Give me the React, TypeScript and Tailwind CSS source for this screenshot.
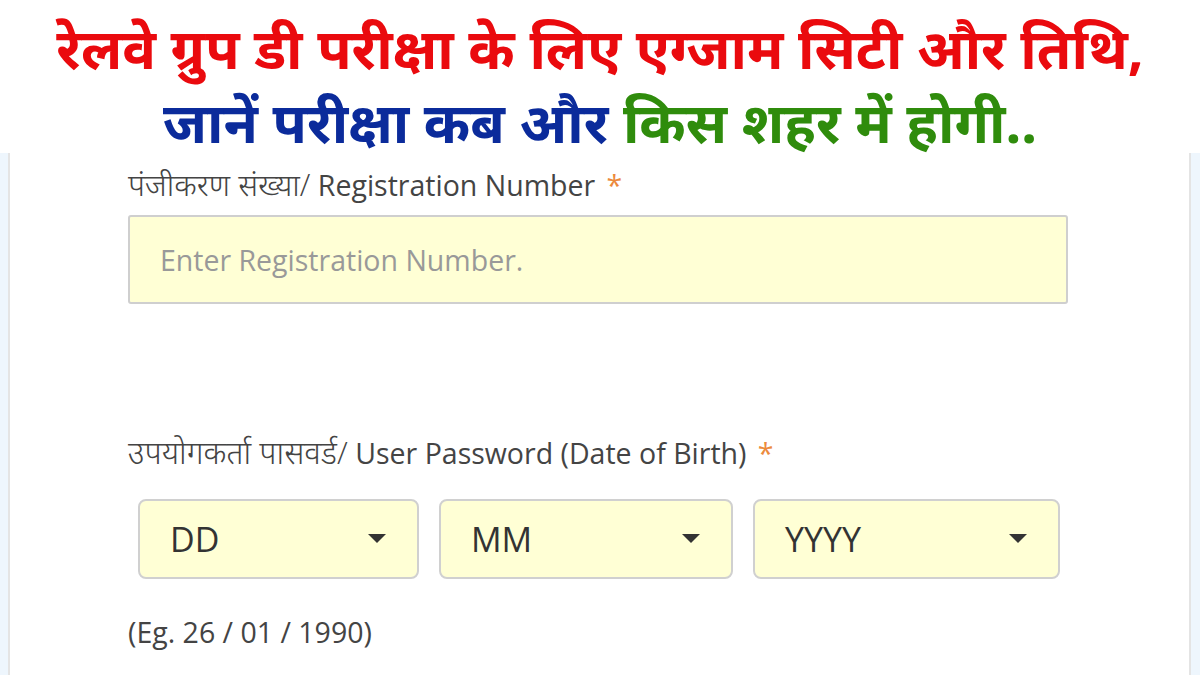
export default function App() {
  const selects = [
    { label: "DD", w: "w-[281px]" },
    { label: "MM", w: "w-[294px]" },
    { label: "YYYY", w: "w-[307px]" },
  ];

  return (
    <div className="w-[1200px] h-[675px] overflow-hidden bg-white flex flex-col font-['Open_Sans','Noto_Sans',sans-serif]">
      {/* heading */}
      <div className="h-[153px] flex flex-col items-center pt-[10px] font-bold text-[56px] leading-[74px] font-['Noto_Sans','Open_Sans',sans-serif]">
        <div className="text-[#ea0a0e]">रेलवे ग्रुप डी परीक्षा के लिए एग्जाम सिटी और तिथि,</div>
        <div>
          <span className="text-[#0b2b9b]">जानें परीक्षा कब और </span>
          <span className="text-[#2f8c0c]">किस शहर में होगी..</span>
        </div>
      </div>

      {/* form */}
      <div className="flex-1 flex">
        <div className="w-[10px] bg-[#eef6fd] border-r-2 border-[#e4e4e4]" />
        <div className="flex-1 flex flex-col pl-[118px] pt-[14px]">
          <label className="text-[28.5px] leading-[34px] text-[#444]">
            <span className="text-[31px] font-light">पंजीकरण संख्या/</span> Registration Number{" "}
            <span className="text-[#ec8a3c] ml-1">*</span>
          </label>
          <input
            className="mt-[13px] w-[940px] h-[89px] bg-[#ffffd5] border-2 border-[#cfcfcf] rounded-[3px] pl-[30px] text-[28.5px] text-[#444] placeholder:text-[#999] outline-none"
            placeholder="Enter Registration Number."
          />
          <label className="mt-[131px] text-[28.5px] leading-[34px] text-[#444]">
            <span className="text-[31.5px] font-light">उपयोगकर्ता पासवर्ड/</span> User Password (Date of Birth){" "}
            <span className="text-[#ec8a3c] ml-1">*</span>
          </label>
          <div className="mt-[29px] ml-[10px] flex gap-[20px]">
            {selects.map((s) => (
              <div
                key={s.label}
                className={`${s.w} h-[80px] bg-[#ffffd5] border-2 border-[#d0d0d0] rounded-[8px] flex items-center justify-between pl-[30px] pr-[31px]`}
              >
                <span className="text-[34px] leading-none text-[#333]">{s.label}</span>
                <svg width="18" height="10" viewBox="0 0 18 10">
                  <path d="M0 0 L18 0 L9 9 Z" fill="#333" />
                </svg>
              </div>
            ))}
          </div>
          <div className="mt-[36px] text-[28.5px] leading-[34px] text-[#444]">(Eg. 26 / 01 / 1990)</div>
        </div>
        <div className="w-[11px] bg-[#eef6fd] border-l-2 border-[#e4e4e4]" />
      </div>
    </div>
  );
}
